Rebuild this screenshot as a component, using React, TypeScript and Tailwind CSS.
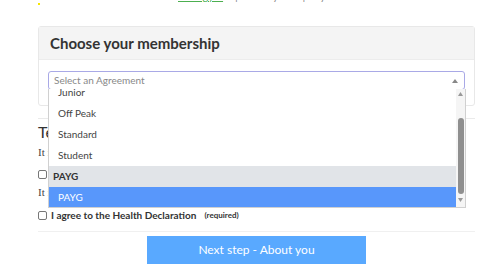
import React from "react";

const sans = { fontFamily: 'Lato, "Open Sans", Arial, sans-serif' };
const serif = { fontFamily: '"Liberation Serif", "Times New Roman", serif' };

export default function App() {
  return (
    <div className="relative w-[500px] h-[277px] overflow-hidden bg-white" style={sans}>
      {/* yellow dot */}
      <span className="absolute left-[38px] top-[3px] w-[2px] h-[2px] bg-[#f5e600]" />
      {/* nav */}
      <div className="h-[26px] flex pl-[178px]">
        <div className="-mt-[11px] flex items-start gap-[12px] text-[11px] leading-[13px] text-[#888]">
          <span className="text-[#4caf50] underline">Your gym</span>
          <span>| About you</span>
          <span>| Payment</span>
        </div>
      </div>

      <div className="pl-[38px] pr-[25px] flex flex-col">
        {/* card */}
        <div className="relative border border-[#e8e8e8] rounded-[3px]">
          <div className="h-[33px] bg-[#f4f4f4] border-b border-[#ececec] flex items-center px-[11px]">
            <h2 className="text-[15px] font-bold text-[#333] leading-none">Choose your membership</h2>
          </div>
          <div className="px-[9px] pt-[11px] pb-[15px]">
            <div className="relative h-[19px] border border-[#a9a9e6] rounded-[3px] flex items-center pl-[5px] text-[10px] text-[#888]">
              Select an Agreement
              <svg className="absolute right-[6px] top-[7px]" width="6" height="4" viewBox="0 0 6 4">
                <path d="M0 4 L3 0 L6 4 Z" fill="#888" />
              </svg>
            </div>
          </div>

          {/* dropdown */}
          <div className="absolute left-[9px] top-[62px] w-[418px] h-[119px] z-10 bg-white border border-[#d0d0d0] border-t-0 flex overflow-hidden">
            <div className="flex-1 overflow-hidden">
              <div className="-mt-[7px] flex flex-col text-[10px] text-[#444]">
                <div className="h-[21px] flex items-center pl-[9px]">Junior</div>
                <div className="h-[21px] flex items-center pl-[9px]">Off Peak</div>
                <div className="h-[21px] flex items-center pl-[9px]">Standard</div>
                <div className="h-[21px] flex items-center pl-[9px]">Student</div>
                <div className="h-[21px] flex items-center pl-[4px] bg-[#e1e4e8] font-bold text-[#333]">PAYG</div>
                <div className="h-[21px] flex items-center pl-[9px] bg-[#5897fb] text-white">PAYG</div>
              </div>
            </div>
            <div className="w-[9px] bg-[#f5f5f5] flex flex-col items-center py-[3px]">
              <svg width="5" height="4" viewBox="0 0 5 4"><path d="M0 4 L2.5 0 L5 4 Z" fill="#999" /></svg>
              <div className="mt-[22px] w-[6px] h-[76px] rounded-[3px] bg-[#8f8f8f]" />
              <svg className="mt-[4px]" width="5" height="4" viewBox="0 0 5 4"><path d="M0 0 L2.5 4 L5 0 Z" fill="#999" /></svg>
            </div>
          </div>
        </div>

        <div className="mt-[12px] border-t border-[#eaeaea]" />
        <div className="mt-[3px] text-[16px] leading-[20px] text-[#333]">Terms and conditions</div>
        <div className="mt-[3px] text-[11px] leading-[14px] text-[#444]" style={serif}>It is important that you read and agree to the terms and conditions.</div>
        <div className="mt-[8px] flex items-center gap-[4px] h-[14px]">
          <span className="w-[9px] h-[9px] border border-[#777] rounded-[2px]" />
          <span className="text-[10px] font-bold text-[#333]">I agree to the terms</span>
        </div>
        <div className="mt-[4px] text-[11px] leading-[14px] text-[#444]" style={serif}>It is important that you read the health declaration.</div>
        <div className="mt-[9px] flex items-center h-[14px]">
          <span className="w-[9px] h-[9px] border border-[#777] rounded-[2px]" />
          <span className="ml-[4px] text-[10px] font-bold text-[#333]">I agree to the Health Declaration</span>
          <span className="ml-[8px] text-[8px] font-bold text-[#333]">(required)</span>
        </div>
        <div className="mt-[9px] border-t border-[#f0f0f0]" />
        <div className="mt-[4px] flex justify-center">
          <button className="w-[219px] h-[28px] bg-[#59a9ff] text-white text-[12px]">Next step - About you</button>
        </div>
      </div>
    </div>
  );
}
